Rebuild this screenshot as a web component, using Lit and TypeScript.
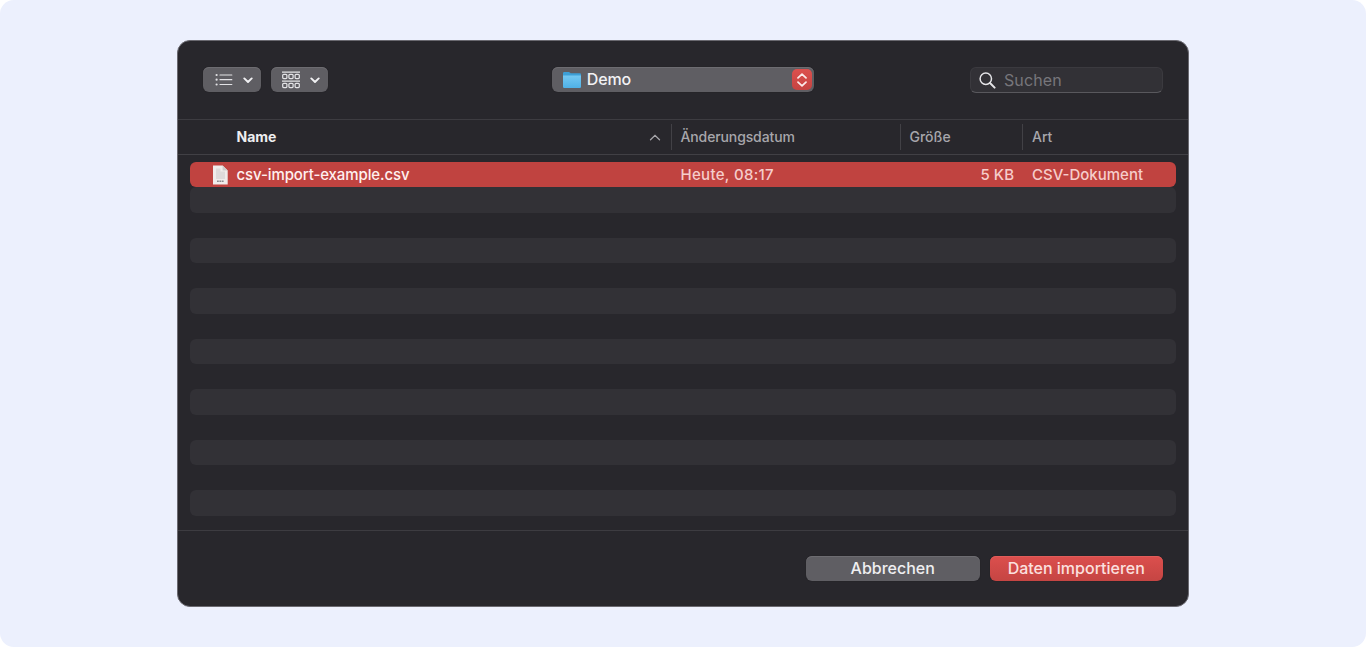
import { LitElement, html, css, svg } from "lit";
import { customElement } from "lit/decorators.js";

const chevron = html`<svg class="chev" width="10" height="7" viewBox="0 0 10 7">
  <path d="M1.3 1.4 L5 5 L8.7 1.4" fill="none" stroke="#f1f1f3" stroke-width="1.9" stroke-linecap="round" stroke-linejoin="round"/>
</svg>`;

const listIcon = html`<svg width="18" height="14" viewBox="0 0 18 14">
  ${[2, 6.7, 11.5].map(y => svg`<circle cx="1.6" cy=${y} r="1.1" fill="#e3e3e6"/>
    <path d="M5 ${y}H16.8" stroke="#e3e3e6" stroke-width="1.2" stroke-linecap="round"/>`)}
</svg>`;

const groupIcon = html`<svg width="20" height="18" viewBox="0 0 20 18" fill="none" stroke="#e3e3e6" stroke-width="1.25">
  <path d="M1 1H19M1 10H19"/>
  ${[3.3, 12.3].map(y => [1.7, 7.9, 14.1].map(x => svg`<rect x=${x} y=${y} width="4.2" height="4.3" rx="1"/>`))}
</svg>`;

const folderIcon = html`<svg class="folder" width="20" height="18" viewBox="0 0 20 18">
  <defs><linearGradient id="f" x1="0" y1="0" x2="0" y2="1"><stop offset="0" stop-color="#74c8f2"/><stop offset="1" stop-color="#4fb1e6"/></linearGradient></defs>
  <path d="M1 2.2Q1 1 2.2 1H6.6Q7.3 1 7.9 1.6L8.6 2.2H17.8Q19 2.2 19 3.4V8H1Z" fill="#3d9fd6"/>
  <path d="M1 4.6H19V15.8Q19 17 17.8 17H2.2Q1 17 1 15.8Z" fill="url(#f)"/>
</svg>`;

const fileIcon = html`<svg class="file" width="15" height="20" viewBox="0 0 15 20">
  <path d="M0 .6H9.6L14.7 5.6V19.4H0Z" fill="#f0eceb"/>
  <path d="M3 3.5H7.5V6.5H12V14H3Z" fill="#dedada"/>
  <path d="M9.6 .6V5.6H14.7Z" fill="#cfcbcb"/>
  <path d="M4 16.2H10.8" stroke="#88888c" stroke-width="1.6" stroke-dasharray="1.8 .6"/>
</svg>`;

@customElement("app-root")
export class AppRoot extends LitElement {
  static styles = css`
    :host { display: block; height: 647px; background: #fff; font-family: Inter, "Liberation Sans", sans-serif; }
    * { box-sizing: border-box; }
    svg { display: block; flex: none; }
    .stage { height: 647px; background: #ecf0fd; border-radius: 14px; padding: 40px 177px 0; }
    .dialog { height: 566.5px; background: #28272c; border: 1px solid #6a6970; border-radius: 13px; overflow: hidden; display: flex; flex-direction: column; }
    .toolbar { height: 79px; border-bottom: 1px solid #3d3c41; padding: 0 25px 1px 25px; display: flex; align-items: center; justify-content: space-between; flex: none; }
    .side { display: flex; gap: 10px; width: 193px; margin-left: -.5px; }
    .btn { height: 25px; border-radius: 6px; background: #5f5e63; box-shadow: inset 0 1px 0 #6d6c71, 0 0 1px #18171a; display: flex; align-items: center; }
    .view { width: 58px; padding-left: 12px; gap: 10px; }
    .group { width: 57px; padding-left: 10px; gap: 9px; }
    .chev { margin-top: 1px; }
    .path { width: 262px; padding: 0 2px 0 10px; color: #f2f2f4; font-size: 16px; font-weight: 500; letter-spacing: -.1px; }
    .path span { flex: 1; margin-left: 5px; padding-bottom: 1px; }
    .stepper { width: 20px; height: 21px; border-radius: 5px; background: linear-gradient(#dc504e, #c64341); display: grid; place-items: center; }
    .search { width: 193px; height: 26px; border-radius: 6px; border: 1px solid #3b3a3f; border-bottom-color: #59585d; background: #323136; display: flex; align-items: center; padding-left: 8px; gap: 8px; color: #77767b; font-size: 16px; letter-spacing: .1px; margin-top: 1px; }
    .head { height: 35px; border-bottom: 1px solid #414045; display: grid; grid-template-columns: 492.5px 229px 122.5px 1fr; align-items: center; color: #a7a6ab; font-size: 14px; font-weight: 450; flex: none; }
    .cell { height: 26px; display: flex; align-items: center; border-left: 1px solid #424146; padding: 0 0 2px 9px; }
    .name { border: 0; padding: 0 10px 2px 58.5px; justify-content: space-between; color: #eeeef0; font-weight: 650; }
    .name svg { margin-top: 2px; }
    .date-h { letter-spacing: -.12px; }
    .rows { flex: 1; padding: 7px 12px 0; }
    .row { height: 25.25px; border-radius: 6px; }
    .row:nth-child(even) { background: #323136; }
    .row.selected { background: #c04340; display: grid; grid-template-columns: 481px 229px 122px 1fr; align-items: center; color: #f6cdcb; font-size: 15px; font-weight: 450; }
    .fname { display: flex; align-items: center; gap: 9px; padding-left: 22.5px; color: #fff0ef; font-weight: 500; letter-spacing: -.11px; }
    .row.selected span, .date, .size, .kind { padding-bottom: 1px; }
    .date { padding-left: 9.5px; letter-spacing: .32px; }
    .kind { padding-left: 10px; }
    .size { text-align: right; padding-right: 8px; }
    .foot { height: 76px; border-top: 1px solid #3d3c41; display: flex; justify-content: flex-end; gap: 10px; padding: 25px 25px 0 0; flex: none; }
    .action { width: 173.5px; justify-content: center; color: #efeff1; font-size: 16px; font-weight: 450; padding-bottom: 1px; }
    .primary { background: linear-gradient(#dc4f4d, #c54543); box-shadow: inset 0 1px 0 #e05c5a, 0 0 1px #18171a; color: #fbe0df; }
  `;

  render() {
    return html`<div class="stage"><div class="dialog">
      <div class="toolbar">
        <div class="side">
          <div class="btn view">${listIcon}${chevron}</div>
          <div class="btn group">${groupIcon}${chevron}</div>
        </div>
        <div class="btn path">${folderIcon}<span>Demo</span>
          <div class="stepper"><svg width="12" height="16" viewBox="0 0 12 16"><path d="M2 5.8L6 2.2L10 5.8M2 10.2L6 13.8L10 10.2" fill="none" stroke="#fbe9e9" stroke-width="1.8" stroke-linecap="round" stroke-linejoin="round"/></svg></div>
        </div>
        <div class="search"><svg width="17" height="17" viewBox="0 0 17 17" fill="none" stroke="#e4e4e7" stroke-linecap="round"><circle cx="6.8" cy="6.8" r="5.7" stroke-width="1.5"/><path d="M11 11L15.6 15.6" stroke-width="2"/></svg><span>Suchen</span></div>
      </div>
      <div class="head">
        <div class="cell name"><span>Name</span><svg width="12" height="8" viewBox="0 0 12 8"><path d="M1.5 6.7L6 2.3L10.5 6.7" fill="none" stroke="#a7a6ab" stroke-width="1.3" stroke-linecap="round"/></svg></div>
        <div class="cell date-h">Änderungsdatum</div>
        <div class="cell">Größe</div>
        <div class="cell">Art</div>
      </div>
      <div class="rows">
        <div class="row selected">
          <div class="fname">${fileIcon}<span>csv-import-example.csv</span></div>
          <div class="date">Heute, 08:17</div>
          <div class="size">5 KB</div>
          <div class="kind">CSV-Dokument</div>
        </div>
        ${Array.from({ length: 13 }, () => html`<div class="row"></div>`)}
      </div>
      <div class="foot">
        <div class="btn action">Abbrechen</div>
        <div class="btn action primary">Daten importieren</div>
      </div>
    </div></div>`;
  }
}
